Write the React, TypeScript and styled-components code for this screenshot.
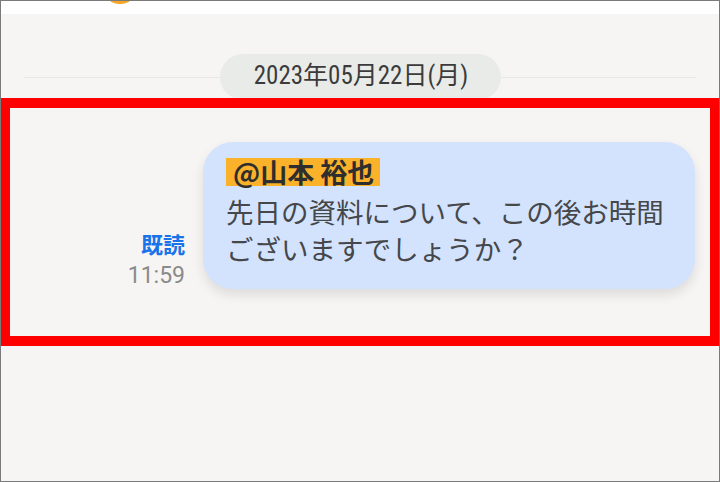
import React from "react";
import styled, { createGlobalStyle } from "styled-components";

const GlobalStyle = createGlobalStyle`
  html, body {
    margin: 0;
    padding: 0;
    background: #f6f5f3;
  }
  * {
    box-sizing: border-box;
  }
`;

const Screen = styled.div`
  width: 720px;
  height: 482px;
  border: 1px solid #7a7a7a;
  background: #f6f5f3;
  overflow: hidden;
  display: flex;
  flex-direction: column;
  font-family: "Noto Sans CJK JP", "Noto Sans", Roboto, sans-serif;
`;

const TopBar = styled.div`
  height: 13px;
  background: #ffffff;
  display: flex;
  padding-left: 101px;
  overflow: hidden;
`;

const AvatarEdge = styled.div`
  width: 36px;
  height: 36px;
  border-radius: 50%;
  margin-top: -33px;
  background: #f2a623;
  flex-shrink: 0;
`;

const DateArea = styled.div`
  height: 84px;
  padding: 40px 23px 0;
`;

const DateRow = styled.div`
  display: flex;
  align-items: center;
  height: 46px;

  &::before,
  &::after {
    content: "";
    flex: 1;
    height: 1px;
    background: #e5e8e4;
  }
`;

const DatePill = styled.div`
  width: 281px;
  height: 46px;
  border-radius: 23px;
  background: #e9ebe8;
  display: flex;
  align-items: center;
  justify-content: center;
  padding: 0 0 8px 2px;
  font-family: "Liberation Sans Narrow", "Roboto Condensed", "Noto Sans CJK JP", sans-serif;
  font-size: 25px;
  color: #3b3b3b;
`;

const Highlight = styled.section`
  position: relative;
  z-index: 1;
  height: 248px;
  margin: 0 -1px;
  border: 10px solid #ff0000;
  padding: 34px 15px 0 0;
  display: flex;
  justify-content: flex-end;
  align-items: flex-start;
`;

const MessageRow = styled.div`
  display: flex;
  align-items: flex-end;
  gap: 18px;
`;

const Meta = styled.div`
  display: flex;
  flex-direction: column;
  align-items: flex-end;
`;

const ReadMark = styled.div`
  font-size: 22px;
  font-weight: 700;
  line-height: 24px;
  color: #1a73e8;
  margin-bottom: 8px;
`;

const Time = styled.div`
  font-family: Roboto, "Noto Sans", sans-serif;
  font-size: 23px;
  line-height: 26px;
  color: #8a8a8a;
`;

const Bubble = styled.div`
  width: 492px;
  background: #d3e3fd;
  border-radius: 30px;
  padding: 16px 20px 22px 23px;
  box-shadow: 0 6px 12px rgba(0, 0, 0, 0.1);
`;

const MentionLine = styled.div`
  height: 28px;
  line-height: 28px;
`;

const Mention = styled.span`
  display: inline-block;
  height: 28px;
  line-height: 28px;
  padding: 0 6px 0 7px;
  background: #fbb22b;
  font-size: 27px;
  font-weight: 700;
  color: #2e2e2e;
`;

const Body = styled.p`
  margin: 7px 0 0 0;
  font-size: 27.5px;
  line-height: 37px;
  color: #45474a;
  white-space: nowrap;
`;

export default function App() {
  return (
    <>
      <GlobalStyle />
      <Screen>
        <TopBar>
          <AvatarEdge />
        </TopBar>
        <DateArea>
          <DateRow>
            <DatePill>2023年05月22日(月)</DatePill>
          </DateRow>
        </DateArea>
        <Highlight>
          <MessageRow>
            <Meta>
              <ReadMark>既読</ReadMark>
              <Time>11:59</Time>
            </Meta>
            <Bubble>
              <MentionLine>
                <Mention>@山本 裕也</Mention>
              </MentionLine>
              <Body>
                先日の資料について、この後お時間
                <br />
                ございますでしょうか？
              </Body>
            </Bubble>
          </MessageRow>
        </Highlight>
      </Screen>
    </>
  );
}
